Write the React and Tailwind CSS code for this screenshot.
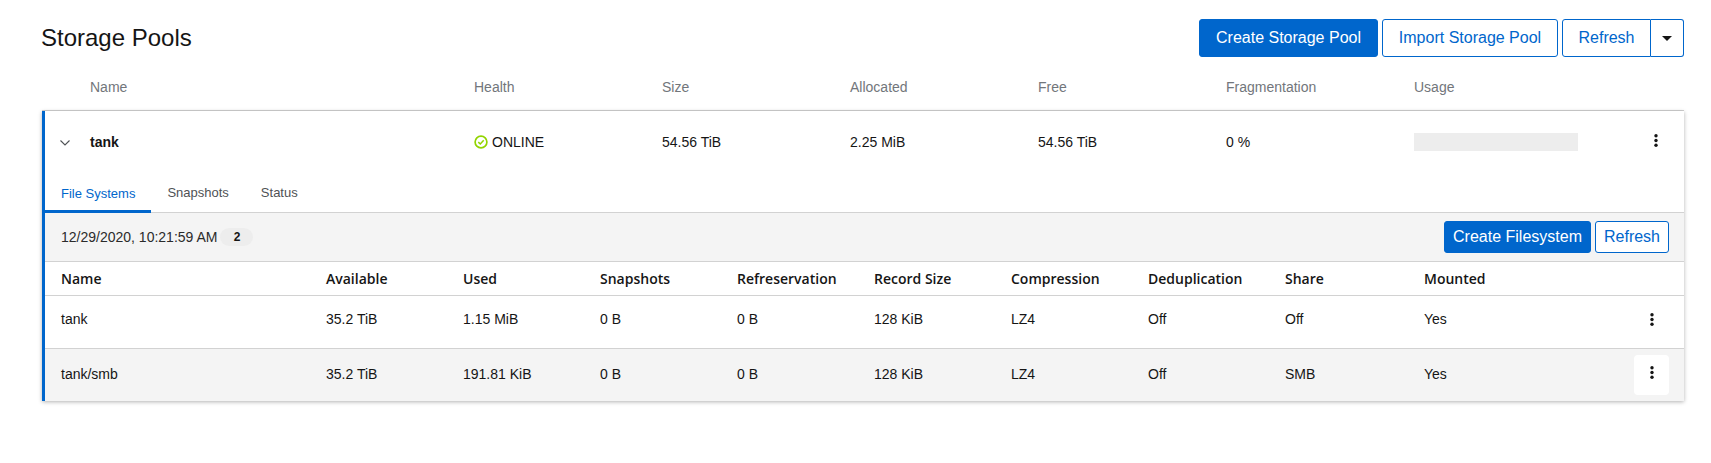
const poolCols = "grid grid-cols-[384px_188px_188px_188px_188px_188px_1fr_auto]";
const fsCols = "grid grid-cols-[265px_137px_137px_137px_137px_137px_137px_137px_139px_1fr_auto]";

const fsHeaders = ["Name", "Available", "Used", "Snapshots", "Refreservation", "Record Size", "Compression", "Deduplication", "Share", "Mounted"];

const filesystems = [
  { values: ["tank", "35.2 TiB", "1.15 MiB", "0 B", "0 B", "128 KiB", "LZ4", "Off", "Off", "Yes"] },
  { values: ["tank/smb", "35.2 TiB", "191.81 KiB", "0 B", "0 B", "128 KiB", "LZ4", "Off", "SMB", "Yes"], active: true },
];

function Kebab({ className = "" }) {
  return (
    <svg width="4" height="13" viewBox="0 0 4 13" className={className} fill="#151515">
      <circle cx="2" cy="1.8" r="1.7" />
      <circle cx="2" cy="6.5" r="1.7" />
      <circle cx="2" cy="11.2" r="1.7" />
    </svg>
  );
}

function Button({ primary, className = "", children }) {
  return (
    <button
      className={`rounded-[3px] border border-[#06c] text-base ${primary ? "bg-[#06c] text-white" : "bg-white text-[#06c]"} ${className}`}
    >
      {children}
    </button>
  );
}

export default function App() {
  return (
    <div className="min-h-[463px] bg-white pl-[42px] pr-[27px] text-sm text-[#151515] font-['Liberation_Sans',Arial,sans-serif]">
      {/* Page header */}
      <div className="flex items-center justify-between pt-[19px]">
        <h1 className="ml-[-1px] text-2xl leading-[38px]">Storage Pools</h1>
        <div className="flex gap-[4px]">
          <Button primary className="h-[38px] w-[179px]">Create Storage Pool</Button>
          <Button className="h-[38px] w-[176px]">Import Storage Pool</Button>
          <div className="flex">
            <Button className="h-[38px] w-[89px] rounded-r-none">Refresh</Button>
            <button className="flex h-[38px] w-[33px] items-center justify-center rounded-r-[3px] border border-l-0 border-[#06c]">
              <span className="h-0 w-0 border-x-[5px] border-t-[5px] border-x-transparent border-t-[#151515]" />
            </button>
          </div>
        </div>
      </div>

      {/* Pool columns */}
      <div className={`${poolCols} h-[54px] items-center border-b border-[#d2d2d2] pl-[48px] pt-[7px] text-[#72767b]`}>
        <span>Name</span>
        <span>Health</span>
        <span>Size</span>
        <span>Allocated</span>
        <span>Free</span>
        <span>Fragmentation</span>
        <span>Usage</span>
      </div>

      {/* Expanded pool */}
      <div className="border-l-[3px] border-[#06c] shadow-[0_1px_4px_rgba(3,3,3,0.3)]">
        <div className={`${poolCols} relative h-[62px] items-center pl-[45px]`}>
          <svg className="absolute left-[15px] top-[29px]" width="10" height="6" viewBox="0 0 10 6" fill="none" stroke="#4f5255" strokeWidth="1.1">
            <path d="M0.5 0.5 5 5 9.5 0.5" />
          </svg>
          <span className="font-bold">tank</span>
          <span className="flex items-center gap-[4px]">
            <svg width="14" height="14" viewBox="0 0 14 14" fill="none" stroke="#92d400">
              <circle cx="7" cy="7" r="5.9" strokeWidth="1.7" />
              <path d="M4.3 7.1 6.3 9 9.7 5.2" strokeWidth="1.5" />
            </svg>
            ONLINE
          </span>
          <span>54.56 TiB</span>
          <span>2.25 MiB</span>
          <span>54.56 TiB</span>
          <span>0 %</span>
          <span className="h-[18px] w-[164px] bg-[#ededed]" />
          <Kebab className="mr-[26px] -translate-y-[2px]" />
        </div>

        {/* Tabs */}
        <div className="flex h-[40px] border-b border-[#d2d2d2] text-[13px] text-[#4f5255]">
          <span className="mb-[-1px] flex items-center border-b-[3px] border-[#06c] px-[16px] pt-[5px] text-[#06c]">File Systems</span>
          <span className="flex items-center px-[16px] pt-[2px]">Snapshots</span>
          <span className="flex items-center px-[16px] pt-[2px]">Status</span>
        </div>

        {/* Toolbar */}
        <div className="flex h-[49px] items-center justify-between border-b border-[#d2d2d2] bg-[#f4f4f4] pl-[16px] pr-[15px]">
          <div className="flex items-center gap-[3px] text-[#2b2b2b]">
            <span>12/29/2020, 10:21:59 AM</span>
            <span className="flex h-[18px] w-[33px] items-center justify-center rounded-full bg-[#ededed] text-xs font-bold text-[#151515]">2</span>
          </div>
          <div className="flex gap-[4px]">
            <Button primary className="h-[32px] w-[147px]">Create Filesystem</Button>
            <Button className="h-[32px] w-[74px]">Refresh</Button>
          </div>
        </div>

        {/* Filesystem table */}
        <div className={`${fsCols} h-[34px] items-center border-b border-[#d2d2d2] pl-[16px] font-semibold font-['Open_Sans',sans-serif]`}>
          {fsHeaders.map((h) => (
            <span key={h}>{h}</span>
          ))}
        </div>
        {filesystems.map((fs) => (
          <div
            key={fs.values[0]}
            className={`${fsCols} items-center pl-[16px] ${fs.active ? "h-[52px] bg-[#f4f4f4]" : "h-[53px] border-b border-[#d2d2d2] pb-[6px]"}`}
          >
            {fs.values.map((v, j) => (
              <span key={j} className={fs.active ? "-translate-y-px" : ""}>{v}</span>
            ))}
            <div className="pr-[15px]">
              <div className={`flex h-[40px] w-[35px] items-center justify-center rounded-[4px] ${fs.active ? "bg-white" : ""}`}>
                <Kebab className={fs.active ? "-translate-y-[3px]" : ""} />
              </div>
            </div>
          </div>
        ))}
      </div>
    </div>
  );
}
